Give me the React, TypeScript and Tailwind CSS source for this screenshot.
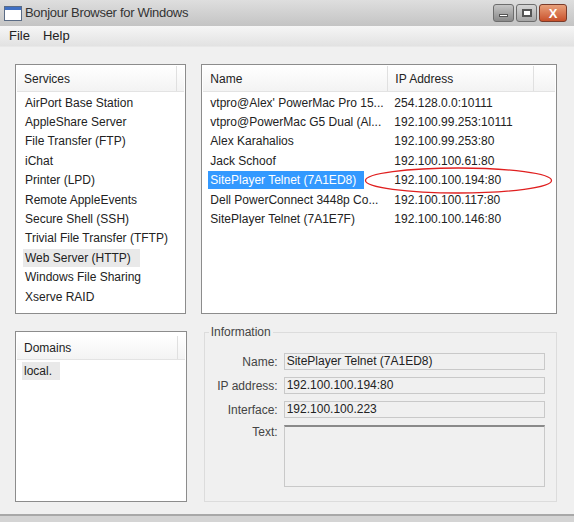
import React from "react";

const services = [
  "AirPort Base Station",
  "AppleShare Server",
  "File Transfer (FTP)",
  "iChat",
  "Printer (LPD)",
  "Remote AppleEvents",
  "Secure Shell (SSH)",
  "Trivial File Transfer (TFTP)",
  "Web Server (HTTP)",
  "Windows File Sharing",
  "Xserve RAID",
];

const hosts = [
  ["vtpro@Alex' PowerMac Pro 15...", "254.128.0.0:10111"],
  ["vtpro@PowerMac G5 Dual (Al...", "192.100.99.253:10111"],
  ["Alex Karahalios", "192.100.99.253:80"],
  ["Jack Schoof", "192.100.100.61:80"],
  ["SitePlayer Telnet (7A1ED8)", "192.100.100.194:80"],
  ["Dell PowerConnect 3448p Co...", "192.100.100.117:80"],
  ["SitePlayer Telnet (7A1E7F)", "192.100.100.146:80"],
];

const font = { fontFamily: '"Liberation Sans", Arial, sans-serif' };

function Header({ children, h }: { children: React.ReactNode; h: string }) {
  return (
    <div className={`flex ${h} shrink-0 items-center bg-gradient-to-b from-white to-[#f3f3f3] border-b border-[#e3e3e3] text-[12px] text-[#222]`}>
      {children}
    </div>
  );
}

function Field({ label, value }: { label: string; value: string }) {
  return (
    <div className="flex items-center h-[17px]">
      <span className="w-[79px] pr-[6px] text-right text-[12px] text-[#444]">{label}</span>
      <div className="w-[261px] h-[17px] border border-[#c9c9c9] bg-[#f0f0f0] px-[2px] text-[12px] leading-[15px] text-[#222]">
        {value}
      </div>
    </div>
  );
}

export default function App() {
  return (
    <div style={font} className="relative w-[574px] h-[522px] bg-[#f0f0f0] overflow-hidden flex flex-col">
      {/* title bar */}
      <div className="h-[26px] shrink-0 flex items-center bg-gradient-to-b from-[#dedede] to-[#c4c4c4] pl-[4px] pr-[7px]">
        <div className="w-[18px] h-[15px] border border-[#5a6b85] bg-white flex flex-col">
          <div className="h-[3px] bg-[#3e6fc4]" />
        </div>
        <span className="ml-[3px] text-[13px] tracking-[-0.3px] text-[#333]">Bonjour Browser for Windows</span>
        <div className="ml-auto flex items-center gap-[2px]">
          <div className="w-[21px] h-[18px] rounded-[3px] border border-[#6d6d6d] bg-gradient-to-b from-[#c6c6c6] to-[#8a8a8a] flex items-center justify-center">
            <div className="w-[9px] h-[3px] bg-white border border-[#555] mt-[5px]" />
          </div>
          <div className="w-[21px] h-[18px] rounded-[3px] border border-[#6d6d6d] bg-gradient-to-b from-[#d6d6d6] to-[#a6a6a6] flex items-center justify-center">
            <div className="w-[10px] h-[8px] border-[2px] border-[#555] bg-white" />
          </div>
          <div className="w-[28px] h-[18px] rounded-[3px] border border-[#7a3b2a] bg-gradient-to-b from-[#e8a07a] to-[#c8502a] flex items-center justify-center text-white text-[13px] font-bold leading-none">
            X
          </div>
        </div>
      </div>
      {/* menu */}
      <div className="h-[21px] shrink-0 flex items-center gap-[13px] pl-[9px] bg-gradient-to-b from-[#f6f6f6] to-[#e2e2e2] border-b border-[#e8e8e8] text-[13px] text-[#222]">
        <span>File</span>
        <span>Help</span>
      </div>

      {/* content */}
      <div className="flex-1 flex flex-col gap-[17px] pl-[15px] pr-[17px] pt-[17px]">
        <div className="flex gap-[15px] h-[250px]">
          {/* services */}
          <div className="w-[172px] flex flex-col border border-[#8c8c8c] bg-white p-[1px]">
            <Header h="h-[26px]">
              <span className="pl-[7px] flex-1">Services</span>
              <span className="w-px h-full bg-[#e0e0e0] mr-[7px]" />
            </Header>
            <div className="pt-[1px] pl-[6px] flex flex-col">
              {services.map((s) => (
                <div key={s} className="h-[19.4px] flex items-center text-[12px] text-[#222]">
                  <span className={s === "Web Server (HTTP)" ? "bg-[#e9e9e9] px-[2px] h-[18px] leading-[18px] pr-[9px]" : "px-[2px]"}>{s}</span>
                </div>
              ))}
            </div>
          </div>
          {/* hosts */}
          <div className="w-[357px] flex flex-col border border-[#8c8c8c] bg-white p-[1px]">
            <Header h="h-[26px]">
              <span className="pl-[7px] w-[185px] h-full flex items-center border-r border-[#e0e0e0]">Name</span>
              <span className="pl-[7px] w-[146px] h-full flex items-center border-r border-[#e0e0e0]">IP Address</span>
            </Header>
            <div className="pt-[1px] pl-[5px] flex flex-col">
              {hosts.map(([n, ip]) => {
                const sel = n === "SitePlayer Telnet (7A1ED8)";
                return (
                  <div key={n} className="h-[19.4px] flex items-center text-[12px] text-[#222]">
                    <div className="w-[186px] flex">
                      <span className={sel ? "bg-[#3399ff] text-white px-[2px] pr-[8px] h-[18px] leading-[18px]" : "px-[2px]"}>{n}</span>
                    </div>
                    <span>{ip}</span>
                  </div>
                );
              })}
            </div>
          </div>
        </div>

        <div className="flex gap-[15px] h-[171px]">
          {/* domains */}
          <div className="w-[172px] flex flex-col border border-[#8c8c8c] bg-white p-[1px]">
            <div className="h-[3px]" />
            <Header h="h-[24px]">
              <span className="pl-[7px] flex-1">Domains</span>
              <span className="w-px h-full bg-[#e0e0e0] mr-[7px]" />
            </Header>
            <div className="pt-[2px] pl-[5px] text-[12px] text-[#222]">
              <span className="bg-[#e9e9e9] inline-block h-[18px] leading-[18px] px-[2px] pr-[8px]">local.</span>
            </div>
          </div>
          {/* information */}
          <div className="w-[356px] relative pt-[1px] pl-[2px]">
            <div className="h-full border border-[#dcdcdc] flex flex-col gap-[7px] pt-[20px]">
              <Field label="Name:" value="SitePlayer Telnet (7A1ED8)" />
              <Field label="IP address:" value="192.100.100.194:80" />
              <Field label="Interface:" value="192.100.100.223" />
              <div className="flex">
                <span className="w-[79px] pr-[6px] text-right text-[12px] text-[#444] leading-[15px]">Text:</span>
                <div className="w-[261px] h-[62px] border border-[#c9c9c9] border-t-[2px] border-t-[#8a8a8a] bg-[#f0f0f0]" />
              </div>
            </div>
            <span className="absolute left-[7px] -top-[6px] bg-[#f0f0f0] px-[2px] text-[12px] leading-[14px] text-[#444]">Information</span>
          </div>
        </div>
      </div>

      <div className="h-[8px] shrink-0 border-t-2 border-[#a8a8a8] bg-[#d4d4d4]" />

      {/* red annotation ellipse */}
      <svg className="absolute left-0 top-0 pointer-events-none" width="574" height="522">
        <ellipse cx="458.5" cy="180.5" rx="93" ry="12.5" fill="none" stroke="#e02020" strokeWidth="1.3" />
      </svg>
    </div>
  );
}
